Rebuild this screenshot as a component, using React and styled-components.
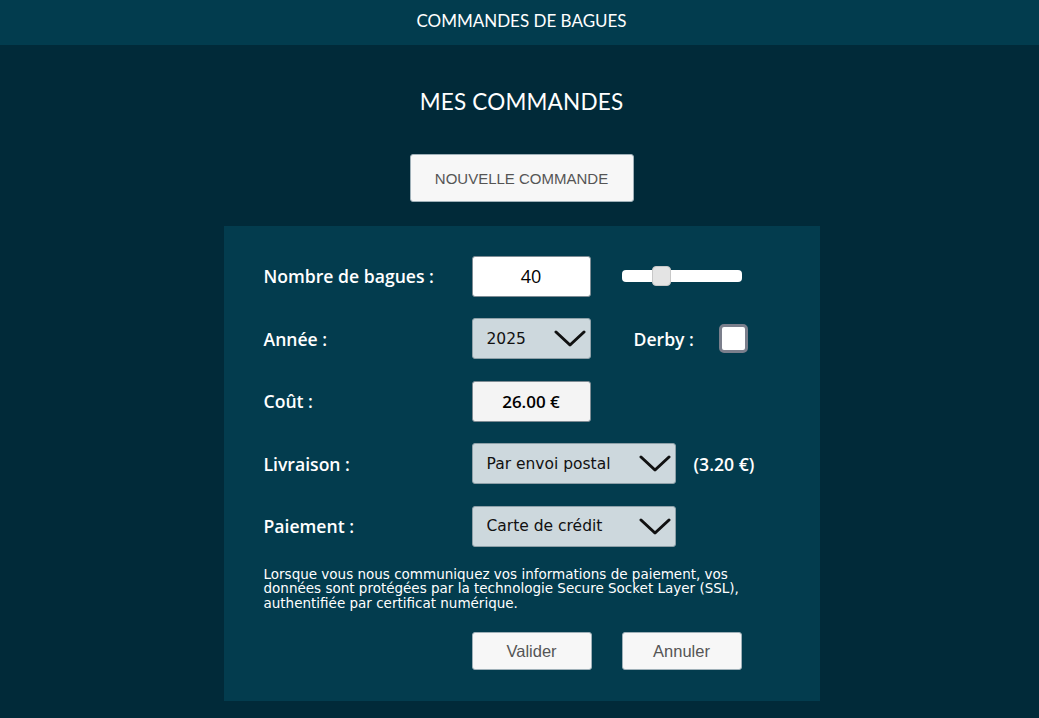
import React from "react";
import styled, { createGlobalStyle } from "styled-components";

const Global = createGlobalStyle`
  html, body { margin: 0; padding: 0; background: #012a39; }
  body { font-family: "Open Sans", "DejaVu Sans", sans-serif; }
  * { box-sizing: border-box; }
`;

const Page = styled.div`
  min-height: 718px;
  background: #012a39;
  display: flex;
  flex-direction: column;
  align-items: center;
`;

const Header = styled.header`
  width: 100%;
  height: 45px;
  background: #023c4e;
  display: flex;
  align-items: center;
  justify-content: center;
  color: #fff;
  font-family: "Lato", sans-serif;
  font-size: 17px;
  padding: 0 0 5px 4px;
`;

const Main = styled.main`
  width: 100%;
  padding-left: 4px;
  display: flex;
  flex-direction: column;
  align-items: center;
`;

const Title = styled.h1`
  margin: 42px 0 0;
  color: #fff;
  font-family: "Lato", sans-serif;
  font-weight: 400;
  font-size: 22.5px;
  letter-spacing: 0.2px;
  line-height: 30px;
`;

const NewButton = styled.button`
  margin-top: 37px;
  width: 224px;
  height: 48px;
  background: #f7f7f7;
  border: 1px solid #9fb0b8;
  border-radius: 3px;
  color: #555;
  font-family: "Liberation Sans", Arial, sans-serif;
  font-size: 15px;
`;

const Panel = styled.section`
  margin-top: 24px;
  width: 596px;
  background: #033c4e;
  padding: 30px 40px 31px;
  display: flex;
  flex-direction: column;
`;

const Row = styled.div`
  display: flex;
  align-items: center;
  height: 40px;
  margin-bottom: 22.5px;
`;

const Label = styled.label`
  width: 208px;
  flex: none;
  color: #fff;
  font-family: "Open Sans", sans-serif;
  font-weight: 600;
  font-size: 17.6px;
`;

const InlineLabel = styled(Label)`
  width: 85px;
  margin-left: 43px;
`;

const TextInput = styled.input`
  width: 119px;
  height: 41px;
  border: 1px solid #7e8c94;
  border-radius: 3px;
  background: ${(p) => (p.$muted ? "#f4f4f4" : "#fff")};
  text-align: center;
  font-family: "Open Sans", sans-serif;
  font-weight: ${(p) => (p.$muted ? 600 : 500)};
  font-size: ${(p) => (p.$muted ? 17 : 18)}px;
  color: #000;
  outline: none;
`;

const SelectWrap = styled.div`
  position: relative;
  width: ${(p) => p.$w}px;
  height: 41px;
  flex: none;
`;

const Select = styled.select`
  appearance: none;
  -webkit-appearance: none;
  width: 100%;
  height: 100%;
  background: #cdd8dd;
  border: 1px solid #8ea0a8;
  border-radius: 3px;
  padding: 0 0 0 14px;
  font-family: "DejaVu Sans", sans-serif;
  font-size: 15.5px;
  color: #111;
  outline: none;
`;

const Chevron = styled.svg`
  position: absolute;
  right: 5px;
  top: 12px;
  pointer-events: none;
`;

const Slider = styled.input`
  appearance: none;
  -webkit-appearance: none;
  margin: 0 0 0 31px;
  width: 120px;
  height: 12px;
  background: #fff;
  border-radius: 4px;
  outline: none;
  &::-webkit-slider-thumb {
    -webkit-appearance: none;
    width: 19px;
    height: 20px;
    border-radius: 4px;
    background: #e4e4e4;
    border: 1px solid #c8c8c8;
  }
`;

const Checkbox = styled.span`
  display: inline-block;
  width: 29px;
  height: 29px;
  border: 3px solid #7b7f8c;
  border-radius: 5px;
  background: #fff;
`;

const Extra = styled.span`
  margin-left: 18px;
  color: #fff;
  font-family: "Open Sans", sans-serif;
  font-weight: 600;
  font-size: 17.6px;
`;

const Notice = styled.p`
  margin: -2px 0 0;
  color: #fff;
  font-family: "DejaVu Sans", sans-serif;
  font-size: 13.5px;
  line-height: 14.5px;
  width: 495px;
`;

const Actions = styled.div`
  display: flex;
  gap: 30px;
  margin: 22px 0 0 208px;
`;

const ActionButton = styled.button`
  width: 120px;
  height: 38px;
  background: #f7f7f7;
  border: 1px solid #9fb0b8;
  border-radius: 3px;
  color: #555;
  font-family: "Liberation Sans", Arial, sans-serif;
  font-size: 16.5px;
`;

function ChevronIcon() {
  return (
    <Chevron width="32" height="18" viewBox="0 0 32 18">
      <path d="M2 2 L16 15 L30 2" fill="none" stroke="#111" strokeWidth="3" strokeLinecap="round" strokeLinejoin="round" />
    </Chevron>
  );
}

function Dropdown({ width, value, options }) {
  return (
    <SelectWrap $w={width}>
      <Select defaultValue={value}>
        {options.map((o) => (
          <option key={o}>{o}</option>
        ))}
      </Select>
      <ChevronIcon />
    </SelectWrap>
  );
}

export default function App() {
  return (
    <>
      <Global />
      <Page>
        <Header>COMMANDES DE BAGUES</Header>
        <Main>
          <Title>MES COMMANDES</Title>
          <NewButton>NOUVELLE COMMANDE</NewButton>
          <Panel>
            <Row>
              <Label>Nombre de bagues :</Label>
              <TextInput defaultValue="40" />
              <Slider type="range" min="1" max="130" defaultValue="40" />
            </Row>
            <Row>
              <Label>Année :</Label>
              <Dropdown width={119} value="2025" options={["2024", "2025", "2026"]} />
              <InlineLabel>Derby :</InlineLabel>
              <Checkbox />
            </Row>
            <Row>
              <Label>Coût :</Label>
              <TextInput $muted readOnly value="26.00 €" />
            </Row>
            <Row>
              <Label>Livraison :</Label>
              <Dropdown width={204} value="Par envoi postal" options={["Par envoi postal", "Retrait sur place"]} />
              <Extra>(3.20 €)</Extra>
            </Row>
            <Row>
              <Label>Paiement :</Label>
              <Dropdown width={204} value="Carte de crédit" options={["Carte de crédit", "Chèque", "Virement"]} />
            </Row>
            <Notice>
              Lorsque vous nous communiquez vos informations de paiement, vos données sont protégées par la technologie Secure Socket Layer (SSL), authentifiée par certificat numérique.
            </Notice>
            <Actions>
              <ActionButton>Valider</ActionButton>
              <ActionButton>Annuler</ActionButton>
            </Actions>
          </Panel>
        </Main>
      </Page>
    </>
  );
}
